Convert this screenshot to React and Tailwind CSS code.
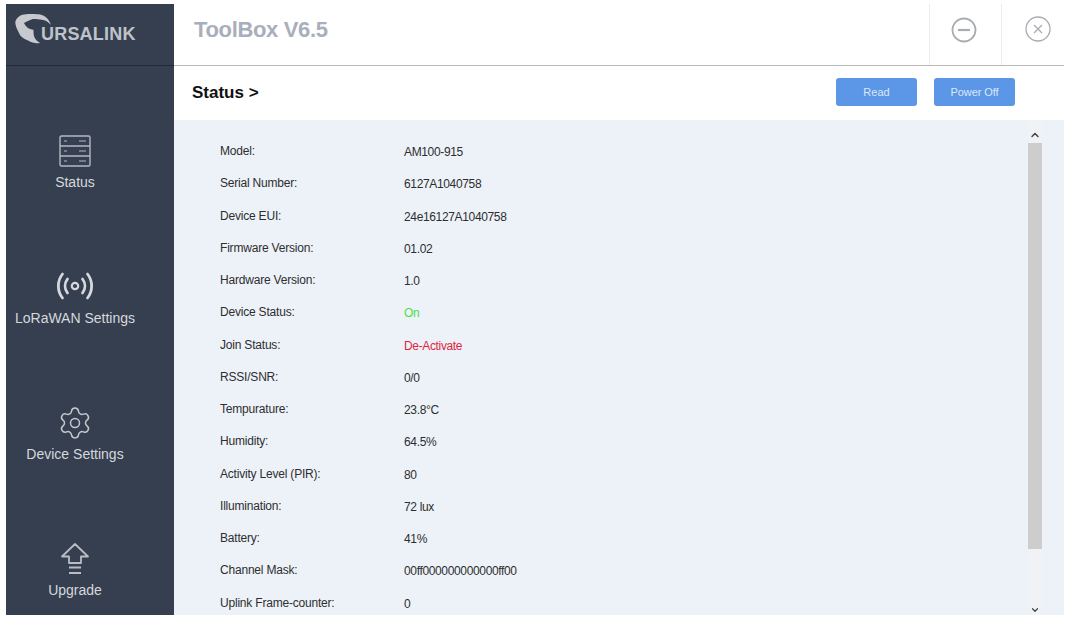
import { ChevronUp, ChevronDown, Settings } from 'lucide-react'

const rows = [
  { label: 'Model:', value: 'AM100-915' },
  { label: 'Serial Number:', value: '6127A1040758' },
  { label: 'Device EUI:', value: '24e16127A1040758' },
  { label: 'Firmware Version:', value: '01.02' },
  { label: 'Hardware Version:', value: '1.0' },
  { label: 'Device Status:', value: 'On', color: 'text-[#4ade4a]' },
  { label: 'Join Status:', value: 'De-Activate', color: 'text-[#e0263c]' },
  { label: 'RSSI/SNR:', value: '0/0' },
  { label: 'Tempurature:', value: '23.8°C' },
  { label: 'Humidity:', value: '64.5%' },
  { label: 'Activity Level (PIR):', value: '80' },
  { label: 'Illumination:', value: '72 lux' },
  { label: 'Battery:', value: '41%' },
  { label: 'Channel Mask:', value: '00ff000000000000ff00' },
  { label: 'Uplink Frame-counter:', value: '0' },
]

const StatusIcon = () => (
  <svg width="32" height="32" viewBox="0 0 32 32" fill="none" stroke="#b4b9c1" strokeWidth="1.4">
    <rect x="1" y="1" width="30" height="30" rx="1.5" />
    <path d="M1 11h30M1 21h30" />
    <path d="M5 6h3M5 16h3M5 26h3M20 6h7M20 16h7M20 26h7" strokeWidth="1.2" />
  </svg>
)

const RadioIcon = () => (
  <svg width="38" height="30" viewBox="0 0 38 30" fill="none" stroke="#d5d8dc" strokeWidth="2.8" strokeLinecap="round" className="-mt-[2px]">
    <circle cx="19" cy="15" r="3.200" strokeWidth="2.200" />
    <path d="M11.5 8c-3.200 4.200-3.200 9.800 0 14M26.500 8c3.200 4.200 3.200 9.800 0 14" />
    <path d="M6.500 3c-5.500 7-5.500 17 0 24M31.500 3c5.500 7 5.500 17 0 24" />
  </svg>
)

const UpgradeIcon = () => (
  <svg width="30" height="34" viewBox="0 0 30 34" fill="none" stroke="#b9bdc3" strokeWidth="1.8" strokeLinejoin="round">
    <path d="M15 2 2 14.500h7V21h12v-6.500h7z" />
    <path d="M9 25.500h12M9 31h12" />
  </svg>
)

const navItems = [
  { label: 'Status', icon: <StatusIcon /> },
  { label: 'LoRaWAN Settings', icon: <RadioIcon /> },
  { label: 'Device Settings', icon: <Settings size={36} strokeWidth={1} className="text-[#c4c8cd]" /> },
  { label: 'Upgrade', icon: <UpgradeIcon /> },
]

export default function App() {
  return (
    <div className="w-[1073px] h-[623px] bg-white overflow-hidden pl-[6px] pt-[4px] pr-[9px] pb-[8px] font-['Liberation_Sans',Arial,sans-serif]">
      <div className="flex h-full">
        <aside className="w-[168px] flex flex-col bg-[#353f50] shrink-0 overflow-hidden">
          <div className="h-[62px] border-b border-[#232b38] flex items-start pl-[9px] pt-[10px] shrink-0">
            <svg width="38" height="32" viewBox="0 0 38 32" className="shrink-0">
              <path d="M.3 7.700C2 3 6 .3 11 .3c3-.3 6-.3 13 0 6 1 10 5 12 10.700-3-3-5-4.500-8-5-4-1-7-1-10-1-3 .5-6 2.500-9 4 1 2 2.500 4 4 5 2 1 4 1.500 5.500 2 0 3 0 5 1 7.500 1 2 3 4 5.500 5.500-4 .5-8 0-12-2.500C8 25 5 22 4 19 2 15 0 11 .3 7.700z" fill="#c6cace" />
            </svg>
            <span className="-ml-[12px] mt-[11px] text-[18px] leading-[18px] tracking-[0.2px] text-[#bfc3c9] font-bold">URSALINK</span>
          </div>
          {navItems.map((item) => (
            <div key={item.label} className="h-[136px] shrink-0 pt-[56px] pr-[30px] flex flex-col items-center justify-center">
              <div className="h-[36px] flex items-center justify-center">{item.icon}</div>
              <span className="mt-[4px] text-[14px] leading-[18px] text-[#d5d8dc]">{item.label}</span>
            </div>
          ))}
        </aside>

        <main className="flex-1 flex flex-col min-w-0">
          <header className="h-[62px] border-b border-[#b9b9b9] flex items-stretch shrink-0">
            <div className="flex-1 flex items-center pl-[20px] pb-[10px] text-[22px] tracking-[-0.35px] font-bold text-[#a8afba]">ToolBox V6.5</div>
            <div className="w-[72px] border-l border-[#ececec] flex items-center justify-center pb-[10px] pr-[4px]">
              <svg width="26" height="26" viewBox="0 0 26 26" fill="none" stroke="#a9acb0" strokeWidth="1.800">
                <circle cx="13" cy="13" r="11.500" />
                <path d="M7 13h12" strokeWidth="2.200" />
              </svg>
            </div>
            <div className="w-[63px] border-l border-[#ececec] flex items-center justify-center pb-[11px] pl-[10px]">
              <svg width="26" height="26" viewBox="0 0 26 26" fill="none" stroke="#a9acb0" strokeWidth="1.300">
                <circle cx="13" cy="13" r="12" />
                <path d="m9 9 8 8M17 9l-8 8" />
              </svg>
            </div>
          </header>

          <div className="h-[54px] flex items-center shrink-0 pl-[18px] pr-[49px]">
            <h1 className="flex-1 text-[17px] font-bold text-[#111]">Status &gt;</h1>
            <button className="w-[81px] h-[28px] -mt-[2px] rounded-[3px] bg-[#5b97e6] text-[11px] text-[#dbe8f8]">Read</button>
            <button className="w-[81px] h-[28px] -mt-[2px] ml-[17px] rounded-[3px] bg-[#5b97e6] text-[11px] tracking-[-0.1px] text-[#dbe8f8]">Power Off</button>
          </div>

          <div className="flex-1 flex min-h-0 bg-[#edf2f9] overflow-hidden">
            <div className="flex-1 pl-[46px] pt-[15px]">
              {rows.map((row) => (
                <div key={row.label} className="flex h-[32.250px] items-center text-[12px] text-[#2e2e2e]">
                  <span className="w-[184px] tracking-[-0.2px]">{row.label}</span>
                  <span className={`${row.color || ''} tracking-[-0.35px] mt-[2px]`}>{row.value}</span>
                </div>
              ))}
            </div>
            <div className="w-[14px] mr-[22px] flex flex-col items-center bg-[#f0f2f5]">
              <ChevronUp size={12} strokeWidth={3} className="text-[#444] mt-[9px] mb-[2px] shrink-0" />
              <div className="w-full h-[406px] bg-[#cdcdcd] shrink-0" />
              <div className="flex-1" />
              <ChevronDown size={10} strokeWidth={3} className="text-[#444] shrink-0" />
            </div>
          </div>
        </main>
      </div>
    </div>
  )
}
